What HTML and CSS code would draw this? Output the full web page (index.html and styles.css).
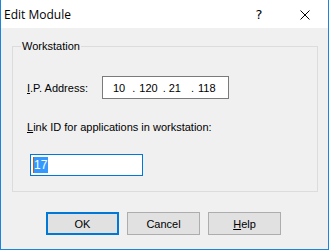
FILE: index.html
```html
<!DOCTYPE html>
<html lang="en">
<head>
  <meta charset="UTF-8" />
  <title>Edit Module</title>
  <link rel="stylesheet" href="styles.css">
</head>
<body>

<div class="window">
  <div class="titlebar">
    <span class="title">Edit Module</span>
    <div class="caption-buttons">
      <span class="caption-btn help-btn">?</span>
      <span class="caption-btn close-btn">
        <svg width="10" height="10" viewBox="0 0 10 10">
          <path d="M0.5 0.5 L9.5 9.5 M9.5 0.5 L0.5 9.5" stroke="#000" stroke-width="1" fill="none"/>
        </svg>
      </span>
    </div>
  </div>

  <div class="content">
    <fieldset class="group">
      <legend>Workstation</legend>

      <div class="ip-row">
        <label class="ip-label"><u>I</u>.P. Address:</label>
        <div class="ip-box">
          <span class="o1">10</span><span class="d1">.</span><span class="o2">120</span><span class="d2">.</span><span class="o3">21</span><span class="d3">.</span><span class="o4">118</span>
        </div>
      </div>

      <label class="link-label"><u>L</u>ink ID for applications in workstation:</label>
      <div class="link-box"><span class="caret"></span><span class="selected">17</span></div>
    </fieldset>

    <div class="buttons">
      <button class="button default">OK</button>
      <button class="button">Cancel</button>
      <button class="button"><u>H</u>elp</button>
    </div>
  </div>
</div>

</body>
</html>
```

FILE: styles.css
```css
body {
  margin: 0;
  padding: 0;
  background: #f0f0f0;
}
.window {
  width: 329px;
  height: 250px;
  box-sizing: border-box;
  border: 1px solid #1a85da;
  border-top: none;
  background: #f0f0f0;
  font-family: "Liberation Sans", Arial, sans-serif;
  font-size: 11px;
  color: #000;
}
.titlebar {
  height: 28px;
  background: #fff;
  display: flex;
  align-items: center;
  justify-content: space-between;
}
.title {
  font-family: "Open Sans", "Noto Sans", sans-serif;
  font-size: 12px;
  padding-left: 3px;
  margin-top: 1px;
}
.caption-buttons {
  display: flex;
  height: 28px;
}
.caption-btn {
  width: 46px;
  display: flex;
  align-items: center;
  justify-content: center;
}
.help-btn {
  font-family: "DejaVu Sans", sans-serif;
  font-size: 13px;
  margin-top: 1px;
}
.close-btn svg {
  display: block;
  margin-top: 1px;
}
.content {
  padding: 12px 10px 0 11px;
}
.group {
  margin: 0;
  padding: 0 0 14px 14px;
  height: 152px;
  box-sizing: border-box;
  border: 1px solid #dcdcdc;
}
.group legend {
  padding: 0 1px;
  margin-left: -6px;
  color: #000;
}
.ip-row {
  display: flex;
  align-items: center;
  margin-top: 24px;
}
.ip-label {
  width: 75px;
}
.ip-box {
  width: 127px;
  height: 23px;
  box-sizing: border-box;
  border: 1px solid #7a7a7a;
  background: #fff;
  display: flex;
  align-items: center;
  padding-left: 10px;
  font-size: 11px;
}
.d1 { margin-left: 7px; }
.o2 { margin-left: 4px; }
.d2 { margin-left: 5px; }
.o3 { margin-left: 3px; }
.d3 { margin-left: 10px; }
.o4 { margin-left: 4px; }
.link-label {
  display: block;
  margin-top: 22px;
}
.link-box {
  margin-top: 21px;
  margin-left: 3px;
  width: 113px;
  height: 22px;
  box-sizing: border-box;
  border: 1px solid #0078d7;
  background: #fff;
  display: flex;
  align-items: center;
  padding-left: 2px;
  font-size: 12px;
}
.caret {
  width: 1px;
  height: 16px;
  background: #c05a1a;
}
.selected {
  background: #3399ff;
  color: #fff;
  height: 16px;
  line-height: 16px;
  padding-right: 1px;
}
.buttons {
  display: flex;
  gap: 8px;
  padding-left: 34px;
  margin-top: 20px;
}
.button {
  width: 73px;
  height: 23px;
  box-sizing: border-box;
  background: #e1e1e1;
  border: 1px solid #adadad;
  font-family: "Liberation Sans", Arial, sans-serif;
  font-size: 11px;
  color: #000;
  padding: 0;
}
.button.default {
  border: 2px solid #0078d7;
}
```
